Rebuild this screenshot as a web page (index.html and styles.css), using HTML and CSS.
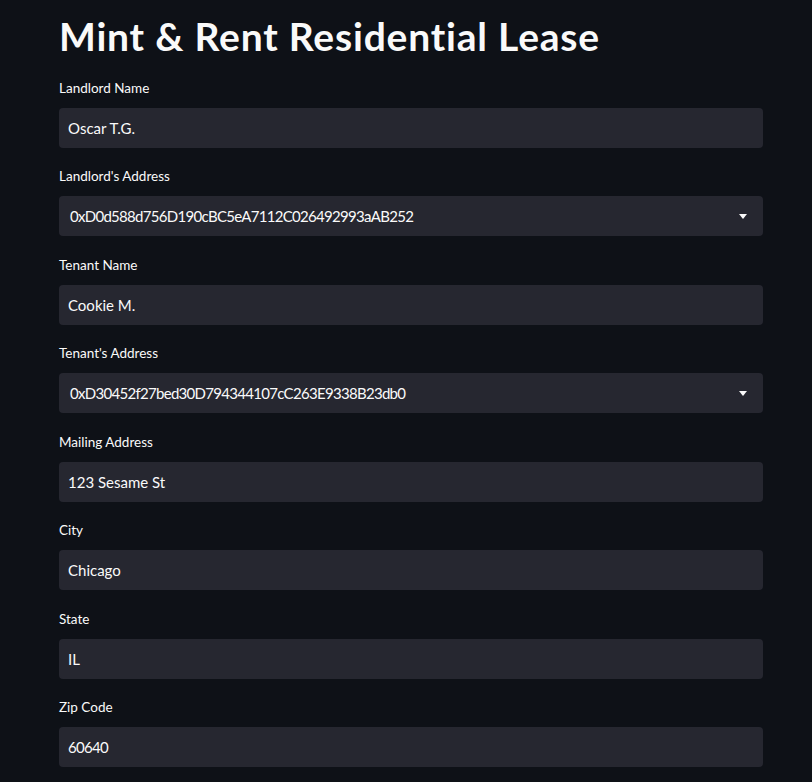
FILE: index.html
```html
<!DOCTYPE html>
<html lang="en">
<head>
<meta charset="utf-8">
<title>Mint &amp; Rent Residential Lease</title>
<link rel="stylesheet" href="styles.css">
</head>
<body>
<main class="page">
  <h1 class="title">Mint &amp; Rent Residential Lease</h1>

  <div class="field">
    <label class="label">Landlord Name</label>
    <div class="input">Oscar T.G.</div>
  </div>

  <div class="field">
    <label class="label">Landlord's Address</label>
    <div class="input select">
      <span class="num">0xD0d588d756D190cBC5eA7112C026492993aAB252</span>
      <svg class="caret" width="8" height="5" viewBox="0 0 8 5"><path d="M0 0h8L4 5z" fill="#fafafa"/></svg>
    </div>
  </div>

  <div class="field">
    <label class="label">Tenant Name</label>
    <div class="input">Cookie M.</div>
  </div>

  <div class="field">
    <label class="label">Tenant's Address</label>
    <div class="input select">
      <span class="num">0xD30452f27bed30D794344107cC263E9338B23db0</span>
      <svg class="caret" width="8" height="5" viewBox="0 0 8 5"><path d="M0 0h8L4 5z" fill="#fafafa"/></svg>
    </div>
  </div>

  <div class="field">
    <label class="label">Mailing Address</label>
    <div class="input">123 Sesame St</div>
  </div>

  <div class="field">
    <label class="label">City</label>
    <div class="input">Chicago</div>
  </div>

  <div class="field">
    <label class="label">State</label>
    <div class="input">IL</div>
  </div>

  <div class="field">
    <label class="label">Zip Code</label>
    <div class="input"><span class="num">60640</span></div>
  </div>
</main>
</body>
</html>
```
FILE: styles.css
```css
html, body {
  margin: 0;
  padding: 0;
  background: #0e1117;
  color: #fafafa;
  font-family: "Lato", "Noto Sans", sans-serif;
}

.page {
  width: 704px;
  margin-left: 59px;
  padding-top: 10px;
}

.title {
  margin: 0 0 16px 0;
  font-size: 39px;
  font-weight: 700;
  line-height: 52px;
  letter-spacing: 0.8px;
}

.field {
  display: flex;
  flex-direction: column;
  margin-bottom: 18.43px;
}

.label {
  font-size: 13.5px;
  line-height: 20px;
  height: 20px;
  margin-bottom: 10px;
}

.input {
  box-sizing: border-box;
  height: 40px;
  background: #262730;
  border-radius: 4px;
  padding: 0 9px;
  font-size: 15px;
  line-height: 40px;
  display: flex;
  align-items: center;
}

.num {
  letter-spacing: -0.7px;
}

.select {
  padding-left: 11px;
  padding-right: 16px;
  justify-content: space-between;
}

.caret {
  display: block;
}
```
